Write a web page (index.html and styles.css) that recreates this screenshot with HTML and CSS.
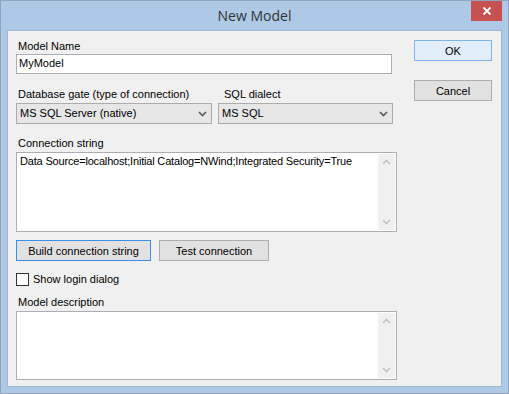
FILE: index.html
```html
<!DOCTYPE html>
<html lang="en">
<head>
    <meta charset="UTF-8">
    <title>New Model</title>
    <link rel="stylesheet" href="styles.css">
</head>
<body>
    <div class="window">
        <div class="titlebar">
            <span></span>
            <span class="title">New Model</span>
            <span class="close">
                <svg width="10" height="10" viewBox="0 0 10 10">
                    <path d="M1.5 1.5 L8.5 8.5 M8.5 1.5 L1.5 8.5" stroke="#fff" stroke-width="1.8"/>
                </svg>
            </span>
        </div>
        <div class="client">
            <div class="left">
                <label class="lbl lbl-name">Model Name</label>
                <div class="edit">MyModel</div>

                <div class="row-selects">
                    <div class="field gate">
                        <label class="lbl">Database gate (type of connection)</label>
                        <div class="combo">
                            <span>MS SQL Server (native)</span>
                            <svg width="9" height="6" viewBox="0 0 9 6"><path d="M1 1 L4.5 4.5 L8 1" fill="none" stroke="#5a5a5a" stroke-width="1.6"/></svg>
                        </div>
                    </div>
                    <div class="field dialect">
                        <label class="lbl">SQL dialect</label>
                        <div class="combo">
                            <span>MS SQL</span>
                            <svg width="9" height="6" viewBox="0 0 9 6"><path d="M1 1 L4.5 4.5 L8 1" fill="none" stroke="#5a5a5a" stroke-width="1.6"/></svg>
                        </div>
                    </div>
                </div>

                <label class="lbl lbl-conn">Connection string</label>
                <div class="memo memo-conn">
                    <div class="memo-text">Data Source=localhost;Initial Catalog=NWind;Integrated Security=True</div>
                    <div class="scroll">
                        <svg width="9" height="6" viewBox="0 0 9 6"><path d="M1 5 L4.5 1.5 L8 5" fill="none" stroke="#c2c2c2" stroke-width="1.6"/></svg>
                        <svg width="9" height="6" viewBox="0 0 9 6"><path d="M1 1 L4.5 4.5 L8 1" fill="none" stroke="#c2c2c2" stroke-width="1.6"/></svg>
                    </div>
                </div>

                <div class="row-buttons">
                    <button class="btn btn-focus btn-build">Build connection string</button>
                    <button class="btn btn-test">Test connection</button>
                </div>

                <div class="check-row">
                    <span class="check"></span>
                    <span>Show login dialog</span>
                </div>

                <label class="lbl lbl-desc">Model description</label>
                <div class="memo memo-desc">
                    <div class="memo-text"></div>
                    <div class="scroll">
                        <svg width="9" height="6" viewBox="0 0 9 6"><path d="M1 5 L4.5 1.5 L8 5" fill="none" stroke="#c2c2c2" stroke-width="1.6"/></svg>
                        <svg width="9" height="6" viewBox="0 0 9 6"><path d="M1 1 L4.5 4.5 L8 1" fill="none" stroke="#c2c2c2" stroke-width="1.6"/></svg>
                    </div>
                </div>
            </div>
            <div class="right">
                <button class="btn btn-ok">OK</button>
                <button class="btn btn-cancel">Cancel</button>
            </div>
        </div>
    </div>
</body>
</html>
```

FILE: styles.css
```css
body {
    margin: 0;
    font-family: "Liberation Sans", Arial, sans-serif;
    font-size: 11px;
    line-height: 13px;
    color: #000;
}

.window {
    width: 509px;
    height: 394px;
    box-sizing: border-box;
    border: 1px solid #8fa4bf;
    background: #adc9e6;
    padding: 0 6px 6px 6px;
    display: flex;
    flex-direction: column;
}

.titlebar {
    height: 29px;
    display: grid;
    grid-template-columns: 1fr auto 1fr;
    align-items: start;
}

.title {
    font-family: "Open Sans", sans-serif;
    font-size: 14px;
    line-height: 29px;
    color: #333;
}

.close {
    justify-self: end;
    width: 31px;
    height: 20px;
    background: #c75050;
    display: flex;
    align-items: center;
    justify-content: center;
}

.client {
    flex: 1;
    border: 1px solid #a3b7cf;
    background: #f0f0f0;
    display: flex;
    padding: 9px 0 0 8px;
}

.left {
    width: 381px;
    display: flex;
    flex-direction: column;
}

.right {
    margin-left: 17px;
    display: flex;
    flex-direction: column;
    gap: 19px;
}

.lbl {
    display: block;
    padding-left: 2px;
}

.lbl-name {
    margin-bottom: 1px;
}

.edit {
    width: 376px;
    height: 20px;
    box-sizing: border-box;
    border: 1px solid #abadb3;
    background: #fff;
    padding: 2px 0 0 2px;
}

.row-selects {
    display: flex;
    margin-top: 14px;
}

.field .lbl {
    margin-bottom: 2px;
}

.gate {
    width: 196px;
}

.dialect {
    width: 175px;
    margin-left: 6px;
}

.dialect .lbl {
    padding-left: 6px;
}

.combo {
    height: 21px;
    box-sizing: border-box;
    border: 1px solid #acacac;
    background: #e6e6e6;
    display: flex;
    align-items: center;
    justify-content: space-between;
    padding: 0 4px 0 3px;
}

.lbl-conn {
    margin-top: 13px;
    margin-bottom: 2px;
}

.memo {
    box-sizing: border-box;
    border: 1px solid #abadb3;
    background: #fff;
    display: flex;
    padding: 1px;
}

.memo-conn {
    height: 80px;
}

.memo-desc {
    height: 69px;
}

.memo-text {
    flex: 1;
    padding: 1px 0 0 2px;
    letter-spacing: -0.18px;
}

.scroll {
    width: 17px;
    background: #f0f0f0;
    display: flex;
    flex-direction: column;
    align-items: center;
    justify-content: space-between;
    padding: 5px 0 5px 0;
}

.btn {
    font-family: "Liberation Sans", Arial, sans-serif;
    font-size: 11px;
    height: 21px;
    box-sizing: border-box;
    border: 1px solid #adadad;
    background: #e1e1e1;
    color: #000;
    padding: 0;
}

.btn-focus {
    border-color: #3c8ee8;
}

.row-buttons {
    display: flex;
    margin-top: 8px;
    gap: 8px;
}

.btn-build {
    width: 135px;
}

.btn-test {
    width: 110px;
}

.check-row {
    display: flex;
    align-items: center;
    gap: 4px;
    margin-top: 12px;
}

.check {
    width: 13px;
    height: 13px;
    box-sizing: border-box;
    border: 1px solid #333;
    background: #fff;
}

.lbl-desc {
    margin-top: 10px;
    margin-bottom: 2px;
}

.btn-ok {
    width: 78px;
    border-color: #7eb4ea;
    background: #e3eefb;
}

.btn-cancel {
    width: 78px;
}
```
